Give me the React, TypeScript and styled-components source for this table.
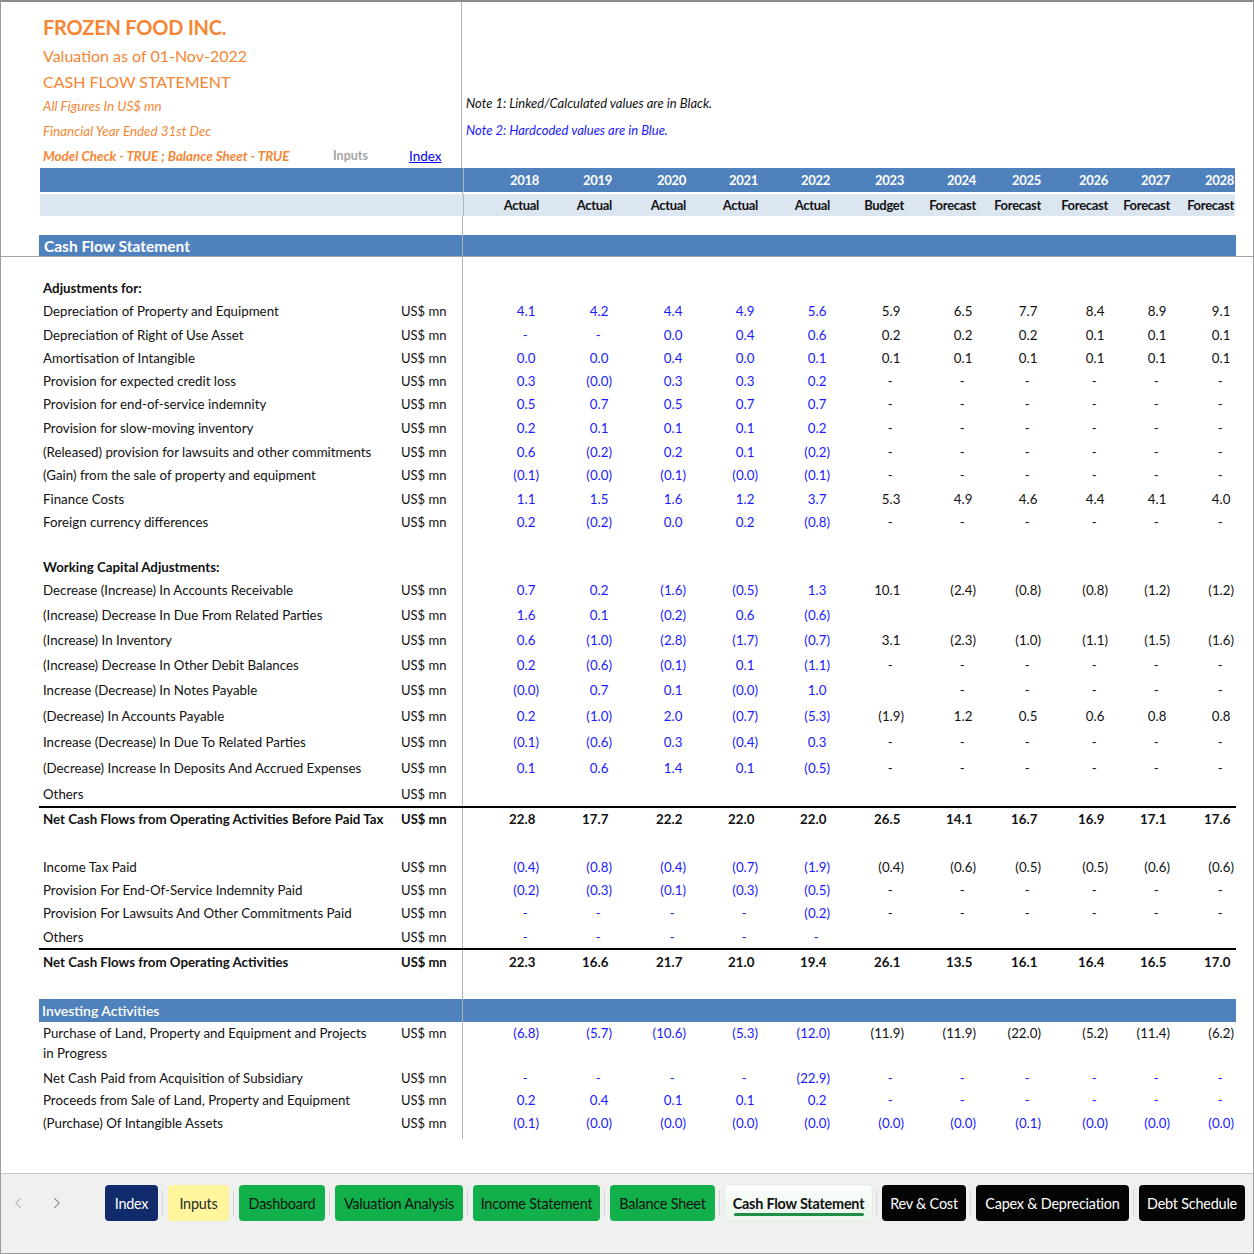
import styled, { createGlobalStyle } from 'styled-components'
import { ChevronLeft, ChevronRight } from 'lucide-react'

type Band = 'dark' | 'light' | 'none'
type Tone = 'navy' | 'yellow' | 'green' | 'black' | 'active'

interface LineItem {
  label: string
  values: string
  h: number
  allBlue?: boolean
}

const YEARS = ['2018', '2019', '2020', '2021', '2022', '2023', '2024', '2025', '2026', '2027', '2028']
const STAGES = ['Actual', 'Actual', 'Actual', 'Actual', 'Actual', 'Budget', 'Forecast', 'Forecast', 'Forecast', 'Forecast', 'Forecast']
const COLS = '78px 73px 74px 72px 72px 74px 72px 65px 67px 62px 64px'

const adjustments: LineItem[] = [
  { label: 'Depreciation of Property and Equipment', values: '4.1 4.2 4.4 4.9 5.6 5.9 6.5 7.7 8.4 8.9 9.1', h: 24 },
  { label: 'Depreciation of Right of Use Asset', values: '- - 0.0 0.4 0.6 0.2 0.2 0.2 0.1 0.1 0.1', h: 23 },
  { label: 'Amortisation of Intangible', values: '0.0 0.0 0.4 0.0 0.1 0.1 0.1 0.1 0.1 0.1 0.1', h: 23 },
  { label: 'Provision for expected credit loss', values: '0.3 (0.0) 0.3 0.3 0.2 - - - - - -', h: 23 },
  { label: 'Provision for end-of-service indemnity', values: '0.5 0.7 0.5 0.7 0.7 - - - - - -', h: 24 },
  { label: 'Provision for slow-moving inventory', values: '0.2 0.1 0.1 0.1 0.2 - - - - - -', h: 24 },
  { label: '(Released) provision for lawsuits and other commitments', values: '0.6 (0.2) 0.2 0.1 (0.2) - - - - - -', h: 23 },
  { label: '(Gain) from the sale of property and equipment', values: '(0.1) (0.0) (0.1) (0.0) (0.1) - - - - - -', h: 24 },
  { label: 'Finance Costs', values: '1.1 1.5 1.6 1.2 3.7 5.3 4.9 4.6 4.4 4.1 4.0', h: 23 },
  { label: 'Foreign currency differences', values: '0.2 (0.2) 0.0 0.2 (0.8) - - - - - -', h: 23 }
]

const workingCapital: LineItem[] = [
  { label: 'Decrease (Increase) In Accounts Receivable', values: '0.7 0.2 (1.6) (0.5) 1.3 10.1 (2.4) (0.8) (0.8) (1.2) (1.2)', h: 24 },
  { label: '(Increase) Decrease In Due From Related Parties', values: '1.6 0.1 (0.2) 0.6 (0.6) _ _ _ _ _ _', h: 25 },
  { label: '(Increase) In Inventory', values: '0.6 (1.0) (2.8) (1.7) (0.7) 3.1 (2.3) (1.0) (1.1) (1.5) (1.6)', h: 25 },
  { label: '(Increase) Decrease In Other Debit Balances', values: '0.2 (0.6) (0.1) 0.1 (1.1) - - - - - -', h: 25 },
  { label: 'Increase (Decrease) In Notes Payable', values: '(0.0) 0.7 0.1 (0.0) 1.0 _ - - - - -', h: 26 },
  { label: '(Decrease) In Accounts Payable', values: '0.2 (1.0) 2.0 (0.7) (5.3) (1.9) 1.2 0.5 0.6 0.8 0.8', h: 26 },
  { label: 'Increase (Decrease) In Due To Related Parties', values: '(0.1) (0.6) 0.3 (0.4) 0.3 - - - - - -', h: 26 },
  { label: '(Decrease) Increase In Deposits And Accrued Expenses', values: '0.1 0.6 1.4 0.1 (0.5) - - - - - -', h: 26 },
  { label: 'Others', values: '_ _ _ _ _ _ _ _ _ _ _', h: 25 }
]

const taxPaid: LineItem[] = [
  { label: 'Income Tax Paid', values: '(0.4) (0.8) (0.4) (0.7) (1.9) (0.4) (0.6) (0.5) (0.5) (0.6) (0.6)', h: 23 },
  { label: 'Provision For End-Of-Service Indemnity Paid', values: '(0.2) (0.3) (0.1) (0.3) (0.5) - - - - - -', h: 23 },
  { label: 'Provision For Lawsuits And Other Commitments Paid', values: '- - - - (0.2) - - - - - -', h: 24 },
  { label: 'Others', values: '- - - - - _ _ _ _ _ _', h: 23 }
]

const investing: LineItem[] = [
  {
    label: 'Purchase of Land, Property and Equipment and Projects\nin Progress',
    values: '(6.8) (5.7) (10.6) (5.3) (12.0) (11.9) (11.9) (22.0) (5.2) (11.4) (6.2)',
    h: 44
  },
  { label: 'Net Cash Paid from Acquisition of Subsidiary', values: '- - - - (22.9) - - - - - -', h: 23, allBlue: true },
  { label: 'Proceeds from Sale of Land, Property and Equipment', values: '0.2 0.4 0.1 0.1 0.2 - - - - - -', h: 22, allBlue: true },
  { label: '(Purchase) Of Intangible Assets', values: '(0.1) (0.0) (0.0) (0.0) (0.0) (0.0) (0.0) (0.1) (0.0) (0.0) (0.0)', h: 23, allBlue: true }
]

const tabs: { name: string; tone: Tone; width: number }[] = [
  { name: 'Index', tone: 'navy', width: 53 },
  { name: 'Inputs', tone: 'yellow', width: 61 },
  { name: 'Dashboard', tone: 'green', width: 86 },
  { name: 'Valuation Analysis', tone: 'green', width: 128 },
  { name: 'Income Statement', tone: 'green', width: 127 },
  { name: 'Balance Sheet', tone: 'green', width: 105 },
  { name: 'Cash Flow Statement', tone: 'active', width: 147 },
  { name: 'Rev & Cost', tone: 'black', width: 84 },
  { name: 'Capex & Depreciation', tone: 'black', width: 153 },
  { name: 'Debt Schedule', tone: 'black', width: 106 }
]

function NumberCell({ value, blue, bold, top }: { value: string; blue: boolean; bold?: boolean; top?: boolean }) {
  if (value === '_') return <Cell $top={top} />
  const isDash = value === '-'
  const isNegative = value.startsWith('(')
  return (
    <Cell $blue={blue} $bold={bold} $top={top}>
      {value}
      {isDash ? <Ghost>0)</Ghost> : !isNegative && <Ghost>)</Ghost>}
    </Cell>
  )
}

function DataRow({ item }: { item: LineItem }) {
  const values = item.values.split(' ')
  const wrapped = item.label.includes('\n')
  return (
    <Row $h={item.h}>
      <Gutter />
      <Main>
        <Label $wrap={wrapped}>{item.label}</Label>
        <Unit $top={wrapped}>US$ mn</Unit>
        <Values>
          {values.map((value, i) => (
            <NumberCell key={i} value={value} blue={item.allBlue || i < 5} top={wrapped} />
          ))}
        </Values>
      </Main>
    </Row>
  )
}

function TotalRow({ label, values, h }: { label: string; values: string; h: number }) {
  return (
    <Row $h={h}>
      <Gutter />
      <Main $rule>
        <Label $bold>{label}</Label>
        <Unit $bold>US$ mn</Unit>
        <Values>
          {values.split(' ').map((value, i) => (
            <NumberCell key={i} value={value} blue={false} bold />
          ))}
        </Values>
      </Main>
    </Row>
  )
}

function Blank({ h }: { h: number }) {
  return (
    <Row $h={h}>
      <Gutter />
      <Main>
        <Label />
        <Unit />
        <Values />
      </Main>
    </Row>
  )
}

function Heading({ text, h }: { text: string; h: number }) {
  return (
    <Row $h={h}>
      <Gutter />
      <Main>
        <Label $bold>{text}</Label>
        <Unit />
        <Values />
      </Main>
    </Row>
  )
}

function SectionBand({ text, h, big }: { text: string; h: number; big?: boolean }) {
  return (
    <Row $h={h}>
      <Gutter />
      <Main $band="dark">
        <BandTitle $big={big}>{text}</BandTitle>
        <Values />
      </Main>
    </Row>
  )
}

export default function App() {
  return (
    <>
      <GlobalStyle />
      <Frame>
        <Sheet>
          <TitleBlock>
            <TitleLeft>
              <Company>FROZEN FOOD INC.</Company>
              <Subtitle $h={28}>Valuation as of 01-Nov-2022</Subtitle>
              <Subtitle $h={25}>CASH FLOW STATEMENT</Subtitle>
              <Caption $h={24}>All Figures In US$ mn</Caption>
              <Caption $h={25}>Financial Year Ended 31st Dec</Caption>
              <CheckRow>
                <CheckText>Model Check - TRUE ; Balance Sheet - TRUE</CheckText>
                <InputsLink>Inputs</InputsLink>
                <IndexLink>Index</IndexLink>
              </CheckRow>
            </TitleLeft>
            <NotesPane>
              <Note>Note 1: Linked/Calculated values are in Black.</Note>
              <Note $blue>Note 2: Hardcoded values are in Blue.</Note>
            </NotesPane>
          </TitleBlock>

          <Row $h={24}>
            <Gutter />
            <Main $band="dark" $inset>
              <Label />
              <Unit />
              <Values>
                {YEARS.map((year) => (
                  <HeadCell key={year} $white>
                    {year}
                  </HeadCell>
                ))}
              </Values>
            </Main>
          </Row>
          <Blank h={2} />
          <Row $h={22}>
            <Gutter />
            <Main $band="light" $inset>
              <Label />
              <Unit />
              <Values>
                {STAGES.map((stage, i) => (
                  <HeadCell key={i}>{stage}</HeadCell>
                ))}
              </Values>
            </Main>
          </Row>
          <Blank h={19} />
          <SectionBand text="Cash Flow Statement" h={21} big />
          <FreezeLine />
          <Blank h={20} />

          <Heading text="Adjustments for:" h={22} />
          {adjustments.map((item) => (
            <DataRow key={item.label} item={item} />
          ))}
          <Blank h={23} />

          <Heading text="Working Capital Adjustments:" h={22} />
          {workingCapital.map((item) => (
            <DataRow key={item.label} item={item} />
          ))}
          <TotalRow
            label="Net Cash Flows from Operating Activities Before Paid Tax"
            values="22.8 17.7 22.2 22.0 22.0 26.5 14.1 16.7 16.9 17.1 17.6"
            h={24}
          />
          <Blank h={25} />

          {taxPaid.map((item, i) => (
            <DataRow key={i} item={item} />
          ))}
          <TotalRow
            label="Net Cash Flows from Operating Activities"
            values="22.3 16.6 21.7 21.0 19.4 26.1 13.5 16.1 16.4 16.5 17.0"
            h={25}
          />
          <Blank h={26} />

          <SectionBand text="Investing Activities" h={23} />
          {investing.map((item) => (
            <DataRow key={item.label} item={item} />
          ))}
          <Blank h={5} />
        </Sheet>

        <TabBar>
          <Nav>
            <NavButton $dim>
              <ChevronLeft size={18} strokeWidth={1.4} />
            </NavButton>
            <NavButton>
              <ChevronRight size={18} strokeWidth={1.4} />
            </NavButton>
          </Nav>
          {tabs.map((tab, i) => (
            <TabSlot key={tab.name} $first={i === 0}>
              <Tab $tone={tab.tone} $w={tab.width}>
                {tab.name}
                {tab.tone === 'active' && <ActiveBar />}
              </Tab>
            </TabSlot>
          ))}
        </TabBar>
      </Frame>
    </>
  )
}

const GlobalStyle = createGlobalStyle`
  html, body {
    margin: 0;
    padding: 0;
    background: #ffffff;
  }
  body {
    font-family: Lato, 'Liberation Sans', sans-serif;
    color: #111111;
  }
  * {
    box-sizing: border-box;
  }
`

const Frame = styled.div`
  width: 1254px;
  height: 1254px;
  border: 1px solid #9c9c9c;
  border-top: 2px solid #8c8c8c;
  display: flex;
  flex-direction: column;
  overflow: hidden;
  background: #ffffff;
`

const Sheet = styled.div`
  flex: 1;
  display: flex;
  flex-direction: column;
`

const TitleBlock = styled.div`
  display: flex;
  height: 166px;
`

const TitleLeft = styled.div`
  width: 460px;
  padding: 10px 0 0 42px;
  display: flex;
  flex-direction: column;
  color: #f58634;
  white-space: nowrap;
`

const Company = styled.div`
  height: 29px;
  font-size: 20px;
  font-weight: 700;
  display: flex;
  align-items: center;
  letter-spacing: -0.2px;
`

const Subtitle = styled.div<{ $h: number }>`
  height: ${({ $h }) => $h}px;
  font-size: 16px;
  display: flex;
  align-items: center;
`

const Caption = styled.div<{ $h: number }>`
  height: ${({ $h }) => $h}px;
  font-size: 13.4px;
  font-style: italic;
  display: flex;
  align-items: center;
`

const CheckRow = styled.div`
  height: 25px;
  display: grid;
  grid-template-columns: 290px 63px 67px;
  align-items: center;
  font-size: 13.4px;
`

const CheckText = styled.span`
  font-weight: 700;
  font-style: italic;
`

const InputsLink = styled.span`
  color: #a6a6a6;
  font-weight: 700;
  font-size: 12.5px;
`

const IndexLink = styled.span`
  color: #0000ee;
  text-decoration: underline;
  padding-left: 13px;
  font-size: 13.5px;
`

const NotesPane = styled.div`
  flex: 1;
  border-left: 1px solid #b3b3b3;
  padding: 89px 0 0 4px;
  display: flex;
  flex-direction: column;
  gap: 3px;
`

const Note = styled.div<{ $blue?: boolean }>`
  height: 24px;
  display: flex;
  align-items: center;
  font-size: 13px;
  font-style: italic;
  color: ${({ $blue }) => ($blue ? '#1a1aff' : '#111111')};
`

const Row = styled.div<{ $h: number }>`
  display: flex;
  height: ${({ $h }) => $h}px;
  flex: none;
`

const Gutter = styled.div`
  width: 38px;
  flex: none;
`

const Main = styled.div<{ $band?: Band; $rule?: boolean; $inset?: boolean }>`
  flex: none;
  display: flex;
  align-items: stretch;
  background: ${({ $band }) =>
    $band === 'dark' ? '#4f81bd' : $band === 'light' ? '#dce6f1' : 'transparent'};
  border-top: ${({ $rule }) => ($rule ? '2px solid #000000' : 'none')};
  margin-left: ${({ $inset }) => ($inset ? '1px' : '0')};
  width: ${({ $inset }) => ($inset ? '1195px' : '1197px')};
`

const Label = styled.div<{ $bold?: boolean; $wrap?: boolean }>`
  width: 356px;
  flex: none;
  padding-left: 4px;
  display: flex;
  align-items: ${({ $wrap }) => ($wrap ? 'flex-start' : 'center')};
  padding-top: ${({ $wrap }) => ($wrap ? '1px' : '0')};
  line-height: ${({ $wrap }) => ($wrap ? '20px' : 'normal')};
  white-space: ${({ $wrap }) => ($wrap ? 'pre-line' : 'nowrap')};
  font-size: 13.3px;
  font-weight: ${({ $bold }) => ($bold ? 700 : 400)};
`

const Unit = styled.div<{ $bold?: boolean; $top?: boolean }>`
  width: 67px;
  flex: none;
  padding: 0 0 0 6px;
  display: flex;
  align-items: center;
  height: 22px;
  align-self: ${({ $top }) => ($top ? 'flex-start' : 'center')};
  font-size: 13px;
  font-weight: ${({ $bold }) => ($bold ? 700 : 400)};
  white-space: nowrap;
`

const Values = styled.div`
  display: grid;
  grid-template-columns: ${COLS};
  border-left: 1px solid #b3b3b3;
  align-self: stretch;
  flex: none;
  width: 774px;
`

const Cell = styled.div<{ $blue?: boolean; $bold?: boolean; $top?: boolean }>`
  display: flex;
  justify-content: flex-end;
  align-items: center;
  padding-right: 2px;
  height: 22px;
  align-self: ${({ $top }) => ($top ? 'start' : 'center')};
  font-size: 13.3px;
  font-weight: ${({ $bold }) => ($bold ? 700 : 400)};
  color: ${({ $blue }) => ($blue ? '#1a1aff' : '#111111')};
  white-space: nowrap;
`

const Ghost = styled.span`
  visibility: hidden;
`

const HeadCell = styled.div<{ $white?: boolean }>`
  display: flex;
  justify-content: flex-end;
  align-items: center;
  padding-right: 3px;
  font-size: 13px;
  font-weight: 700;
  color: ${({ $white }) => ($white ? '#ffffff' : '#111111')};
  letter-spacing: -0.3px;
  white-space: nowrap;
`

const BandTitle = styled.div<{ $big?: boolean }>`
  width: 423px;
  flex: none;
  padding-left: ${({ $big }) => ($big ? '5px' : '3px')};
  display: flex;
  align-items: center;
  color: #ffffff;
  font-size: ${({ $big }) => ($big ? '15.5px' : '14px')};
  font-weight: ${({ $big }) => ($big ? 700 : 600)};
  white-space: nowrap;
`

const FreezeLine = styled.div`
  height: 1px;
  flex: none;
  background: #a3a3a3;
`

const TabBar = styled.div`
  height: 80px;
  flex: none;
  background: #f0f0f0;
  border-top: 1px solid #c6c6c6;
  display: flex;
  align-items: flex-start;
  padding-top: 11px;
`

const Nav = styled.div`
  width: 94px;
  height: 36px;
  flex: none;
  display: flex;
  align-items: center;
  padding-left: 8px;
  gap: 21px;
`

const NavButton = styled.span<{ $dim?: boolean }>`
  display: flex;
  color: ${({ $dim }) => ($dim ? '#a8a8a8' : '#6e6e6e')};
`

const TabSlot = styled.div<{ $first?: boolean }>`
  display: flex;
  align-items: center;
  height: 36px;
  padding-left: 10px;
  position: relative;
  &::before {
    content: '';
    display: ${({ $first }) => ($first ? 'none' : 'block')};
    position: absolute;
    left: 4px;
    top: 5px;
    bottom: 5px;
    width: 1px;
    background: #d6d6d6;
  }
`

const toneStyles: Record<Tone, string> = {
  navy: 'background: #102a6c; color: #ffffff;',
  yellow: 'background: #fff59c; color: #2a2a2a;',
  green: 'background: #12b04b; color: #111111;',
  black: 'background: #050505; color: #ffffff;',
  active:
    'background: linear-gradient(180deg, #fbfdfb 0%, #e9f5eb 100%); color: #111111; font-weight: 700; box-shadow: 0 0 0 1px #e3ece4;'
}

const Tab = styled.div<{ $tone: Tone; $w: number }>`
  position: relative;
  width: ${({ $w }) => $w}px;
  height: 36px;
  border-radius: 4px;
  display: flex;
  align-items: center;
  justify-content: center;
  font-size: 14.4px;
  white-space: nowrap;
  letter-spacing: -0.2px;
  ${({ $tone }) => toneStyles[$tone]}
`

const ActiveBar = styled.span`
  position: absolute;
  left: 9px;
  right: 8px;
  bottom: 5px;
  height: 3px;
  border-radius: 2px;
  background: #1f8f45;
`
